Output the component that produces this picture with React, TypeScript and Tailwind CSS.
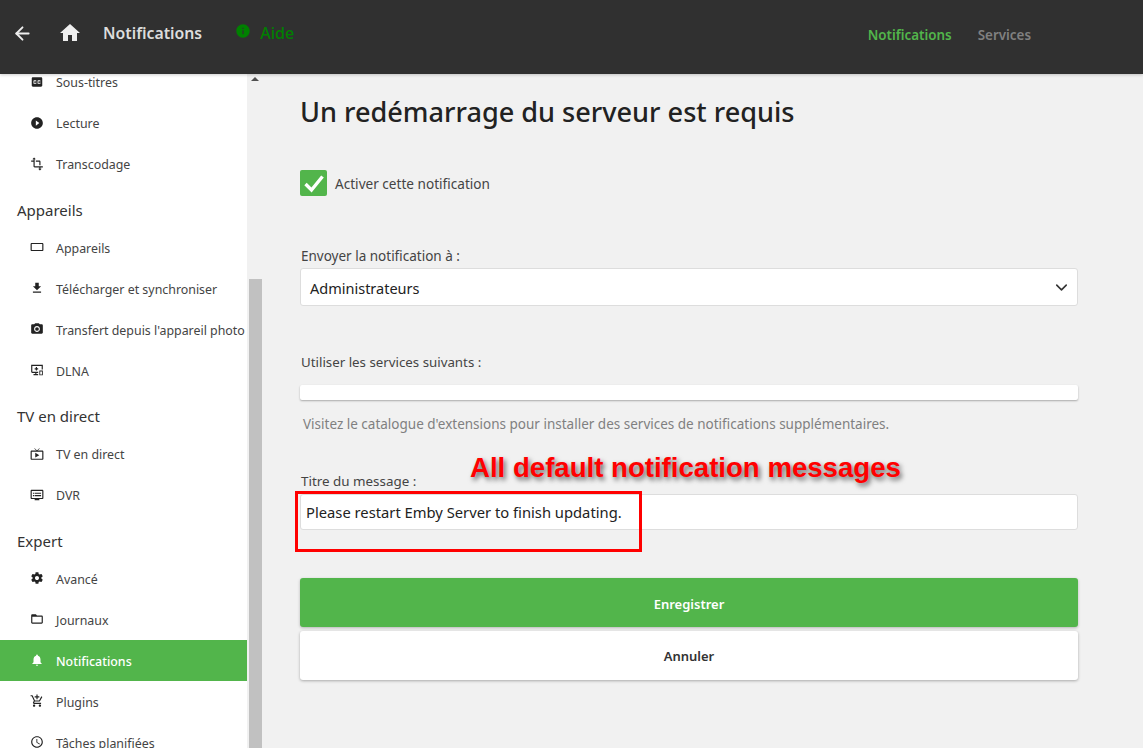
import { ArrowLeft, ChevronDown } from 'lucide-react';

type NavEntry = { label: string; icon: string; active?: boolean };

const icons: Record<string, string> = {
  cc: 'M19 4H5c-1.11 0-2 .9-2 2v12c0 1.1.89 2 2 2h14c1.1 0 2-.9 2-2V6c0-1.1-.9-2-2-2zm-8 7H9.5v-.5h-2v3h2V13H11v1c0 .55-.45 1-1 1H7c-.55 0-1-.45-1-1v-4c0-.55.45-1 1-1h3c.55 0 1 .45 1 1v1zm7 0h-1.5v-.5h-2v3h2V13H18v1c0 .55-.45 1-1 1h-3c-.55 0-1-.45-1-1v-4c0-.55.45-1 1-1h3c.55 0 1 .45 1 1v1z',
  play: 'M12 2C6.48 2 2 6.48 2 12s4.48 10 10 10 10-4.48 10-10S17.52 2 12 2zm-2 14.5v-9l6 4.5-6 4.5z',
  transform: 'M22 18v-2H8V4h2L7 1 4 4h2v2H2v2h4v8c0 1.1.9 2 2 2h8v2h-2l3 3 3-3h-2v-2h4zM10 8h6v6h2V8c0-1.1-.9-2-2-2h-6v2z',
  device: 'M21 5H3c-1.1 0-2 .9-2 2v10c0 1.1.9 2 2 2h18c1.1 0 2-.9 2-2V7c0-1.1-.9-2-2-2zm0 12H3V7h18v10z',
  download: 'M19 9h-4V3H9v6H5l7 7 7-7zM5 18v2h14v-2H5z',
  camera: 'M12 8.8a3.2 3.2 0 1 0 0 6.4 3.2 3.2 0 0 0 0-6.4zM9 2L7.17 4H4c-1.1 0-2 .9-2 2v12c0 1.1.9 2 2 2h16c1.1 0 2-.9 2-2V6c0-1.1-.9-2-2-2h-3.17L15 2H9zm3 15c-2.76 0-5-2.24-5-5s2.24-5 5-5 5 2.24 5 5-2.24 5-5 5z',
  dlna: 'M2 3h20v8h-2V5H4v10h10v2h-3v2h3v2H6v-2h3v-2H4c-1.1 0-2-.9-2-2V3zm8 4h2v2h2v2h-2v2h-2v-2H8V9h2V7zm6 6h6v8h-6v-8zm1.5 1.5v5h3v-5h-3z',
  tv: 'M21 6h-7.59l3.29-3.29L16 2l-4 4-4-4-.71.71L10.59 6H3c-1.1 0-2 .89-2 2v12c0 1.1.9 2 2 2h18c1.1 0 2-.9 2-2V8c0-1.11-.9-2-2-2zm0 14H3V8h18v12zM9 10v8l7-4z',
  dvr: 'M21 3H3c-1.1 0-2 .9-2 2v12c0 1.1.9 2 2 2h5v2h8v-2h5c1.1 0 1.99-.9 1.99-2L23 5c0-1.1-.9-2-2-2zm0 14H3V5h18v12zm-2-9H8v2h11V8zm0 4H8v2h11v-2zM7 8H5v2h2V8zm0 4H5v2h2v-2z',
  settings: 'M19.43 12.98c.04-.32.07-.64.07-.98s-.03-.66-.07-.98l2.11-1.65c.19-.15.24-.42.12-.64l-2-3.46c-.12-.22-.39-.3-.61-.22l-2.49 1c-.52-.4-1.08-.73-1.69-.98l-.38-2.65C14.46 2.18 14.25 2 14 2h-4c-.25 0-.46.18-.49.42l-.38 2.65c-.61.25-1.17.59-1.69.98l-2.49-1c-.23-.09-.49 0-.61.22l-2 3.46c-.13.22-.07.49.12.64l2.11 1.65c-.04.32-.07.65-.07.98s.03.66.07.98l-2.11 1.65c-.19.15-.24.42-.12.64l2 3.46c.12.22.39.3.61.22l2.49-1c.52.4 1.08.73 1.69.98l.38 2.65c.03.24.24.42.49.42h4c.25 0 .46-.18.49-.42l.38-2.65c.61-.25 1.17-.59 1.69-.98l2.49 1c.23.09.49 0 .61-.22l2-3.46c.12-.22.07-.49-.12-.64l-2.11-1.65zM12 15.5c-1.93 0-3.5-1.57-3.5-3.5s1.57-3.5 3.5-3.5 3.5 1.57 3.5 3.5-1.57 3.5-3.5 3.5z',
  folder: 'M20 6h-8l-2-2H4c-1.1 0-1.99.9-1.99 2L2 18c0 1.1.9 2 2 2h16c1.1 0 2-.9 2-2V8c0-1.1-.9-2-2-2zm0 12H4V8h16v10z',
  bell: 'M12 22c1.1 0 2-.9 2-2h-4c0 1.1.89 2 2 2zm6-6v-5c0-3.07-1.64-5.64-4.5-6.32V4c0-.83-.67-1.5-1.5-1.5s-1.5.67-1.5 1.5v.68C7.63 5.36 6 7.92 6 11v5l-2 2v1h16v-1l-2-2z',
  cart: 'M11 9h2V6h3V4h-3V1h-2v3H8v2h3v3zm-4 9c-1.1 0-1.99.9-1.99 2S5.9 22 7 22s2-.9 2-2-.9-2-2-2zm10 0c-1.1 0-1.99.9-1.99 2s.89 2 1.99 2 2-.9 2-2-.9-2-2-2zm-9.83-3.25l.03-.12.9-1.63h7.45c.75 0 1.41-.41 1.75-1.03l3.86-7.01L19.42 4h-.01l-1.1 2-2.76 5H8.53l-.13-.27L6.16 6l-.95-2-.94-2H1v2h2l3.6 7.59-1.35 2.45c-.16.28-.25.61-.25.96 0 1.1.9 2 2 2h12v-2H7.42c-.13 0-.25-.11-.25-.25z',
  clock: 'M11.99 2C6.47 2 2 6.48 2 12s4.47 10 9.99 10C17.52 22 22 17.52 22 12S17.52 2 11.99 2zM12 20c-4.42 0-8-3.58-8-8s3.58-8 8-8 8 3.58 8 8-3.58 8-8 8zm.5-13H11v6l5.25 3.15.75-1.23-4.5-2.67z',
  home: 'M10 20v-6h4v6h5v-8h3L12 3 2 12h3v8z',
  info: 'M12 2C6.48 2 2 6.48 2 12s4.48 10 10 10 10-4.48 10-10S17.52 2 12 2zm1 15h-2v-6h2v6zm0-8h-2V7h2v2z',
};

function Icon({ name, className }: { name: string; className: string }) {
  return (
    <svg viewBox="0 0 24 24" fill="currentColor" className={className}>
      <path d={icons[name]} />
    </svg>
  );
}

function NavItem({ label, icon, active }: NavEntry) {
  return (
    <div
      className={`flex h-[41px] items-center pl-[30px] text-[12.4px] ${
        active ? 'bg-[#52b54b] font-medium text-white' : 'text-[#444444]'
      }`}
    >
      <Icon name={icon} className={`mb-[1px] h-[14px] w-[14px] shrink-0 ${active ? 'text-white' : 'text-[#222222]'}`} />
      <span className="ml-[12px] pt-[3px] whitespace-nowrap">{label}</span>
    </div>
  );
}

function Heading({ children }: { children: string }) {
  return <div className="flex h-[42.5px] items-end pb-[6px] pl-[17px] text-[15px] text-[#333333]">{children}</div>;
}

function Sidebar() {
  return (
    <aside className="h-full w-[247px] shrink-0 overflow-hidden bg-white">
      <div className="mt-[-12.5px]">
        <NavItem label="Sous-titres" icon="cc" />
        <NavItem label="Lecture" icon="play" />
        <NavItem label="Transcodage" icon="transform" />
        <Heading>Appareils</Heading>
        <NavItem label="Appareils" icon="device" />
        <NavItem label="Télécharger et synchroniser" icon="download" />
        <NavItem label="Transfert depuis l'appareil photo" icon="camera" />
        <NavItem label="DLNA" icon="dlna" />
        <Heading>TV en direct</Heading>
        <NavItem label="TV en direct" icon="tv" />
        <NavItem label="DVR" icon="dvr" />
        <Heading>Expert</Heading>
        <NavItem label="Avancé" icon="settings" />
        <NavItem label="Journaux" icon="folder" />
        <NavItem label="Notifications" icon="bell" active />
        <NavItem label="Plugins" icon="cart" />
        <NavItem label="Tâches planifiées" icon="clock" />
      </div>
    </aside>
  );
}

function Scrollbar() {
  return (
    <div className="ml-[2px] flex h-full w-[13px] shrink-0 flex-col">
      <div className="mt-[3px] ml-[2px] h-0 w-0 border-x-[4px] border-b-[4px] border-x-transparent border-b-[#505050]" />
      <div className="mt-[198px] flex-1 bg-[#c1c1c1]" />
    </div>
  );
}

export default function App() {
  return (
    <div className="relative flex h-[748px] w-[1143px] flex-col overflow-hidden bg-[#f1f1f1] font-['Noto_Sans',sans-serif]">
      <header className="z-10 flex h-[74px] shrink-0 bg-[#303030] shadow-[0_1px_3px_rgba(0,0,0,0.2)]">
        <div className="flex h-[66px] flex-1 items-center">
          <ArrowLeft className="ml-[12px] h-[21px] w-[21px] text-[#eeeeee]" strokeWidth={2.2} />
          <Icon name="home" className="ml-[25px] h-[24px] w-[24px] text-[#eeeeee]" />
          <span className="ml-[21px] pt-[1px] text-[15.8px] font-semibold text-[#dddddd]">Notifications</span>
          <Icon name="info" className="mb-[5px] ml-[33px] h-[16px] w-[16px] text-[#008000]" />
          <span className="ml-[9px] text-[16px] font-medium text-[#008000]">Aide</span>
        </div>
        <nav className="flex h-[71px] items-center gap-[26px] pr-[112px] text-[13.4px] font-semibold">
          <span className="text-[#52b54b]">Notifications</span>
          <span className="text-[#808080]">Services</span>
        </nav>
      </header>

      <div className="flex min-h-0 flex-1">
        <Sidebar />
        <Scrollbar />
        <main className="ml-[38px] w-[778px] text-[#333333]">
          <h1 className="mt-[20px] text-[27.1px] leading-[36px] font-medium text-[#222222]">
            Un redémarrage du serveur est requis
          </h1>

          <label className="mt-[40px] flex h-[26px] items-center">
            <span className="flex h-[26px] w-[27px] items-center justify-center rounded-[2px] bg-[#52b54b]">
              <svg viewBox="0 0 24 24" fill="none" stroke="white" strokeWidth={3.4} className="h-[24px] w-[24px]">
                <path d="M3.5 13l6 6L20.5 5.5" />
              </svg>
            </span>
            <span className="ml-[8px] pt-[2px] text-[13.6px] text-[#444444]">Activer cette notification</span>
          </label>

          <div className="mt-[50px] ml-[1px] text-[13.5px] leading-[20px] text-[#444444]">Envoyer la notification à :</div>
          <div className="mt-[2px] flex h-[38px] items-center justify-between rounded-[3px] border border-[#dddddd] bg-white pr-[6px] pl-[9px] text-[14.5px] text-[#222222]">
            <span className="pt-[3px]">Administrateurs</span>
            <ChevronDown className="h-[19px] w-[19px] text-[#333333]" strokeWidth={2} />
          </div>

          <div className="mt-[46px] ml-[1px] text-[13.3px] leading-[20px] text-[#444444]">Utiliser les services suivants :</div>
          <div className="mt-[13px] h-[15px] rounded-[2px] bg-white shadow-[0_1px_2px_rgba(0,0,0,0.3)]" />
          <p className="mt-[14px] ml-[3px] whitespace-nowrap text-[13.5px] leading-[20px] text-[#808080]">
            Visitez le catalogue d'extensions pour installer des services de notifications supplémentaires.
          </p>

          <div className="mt-[37px] ml-[1px] text-[13.4px] leading-[20px] text-[#444444]">Titre du message :</div>
          <div className="mt-[3px] flex h-[36px] items-center rounded-[3px] border border-[#dddddd] bg-white pl-[5px] text-[14.75px] text-[#222222]">
            Please restart Emby Server to finish updating.
          </div>

          <button className="mt-[48px] block h-[49px] w-full rounded-[3px] bg-[#52b54b] pt-[4px] text-[13px] font-semibold text-white shadow-[0_1px_3px_rgba(0,0,0,0.25)]">
            Enregistrer
          </button>
          <button className="mt-[4px] block h-[49px] w-full rounded-[3px] bg-white pt-[2px] text-[13px] font-semibold text-[#333333] shadow-[0_1px_3px_rgba(0,0,0,0.3)]">
            Annuler
          </button>
        </main>
      </div>

      <div className="absolute top-[452px] left-[470px] font-['Liberation_Sans',sans-serif] text-[27.6px] leading-[32px] font-bold whitespace-nowrap text-[#ff0000] [text-shadow:2px_3px_5px_rgba(0,0,0,0.6)]">
        All default notification messages
      </div>
      <div className="absolute top-[491px] left-[295px] h-[61px] w-[347px] border-[3px] border-[#ff0000]" />
    </div>
  );
}
